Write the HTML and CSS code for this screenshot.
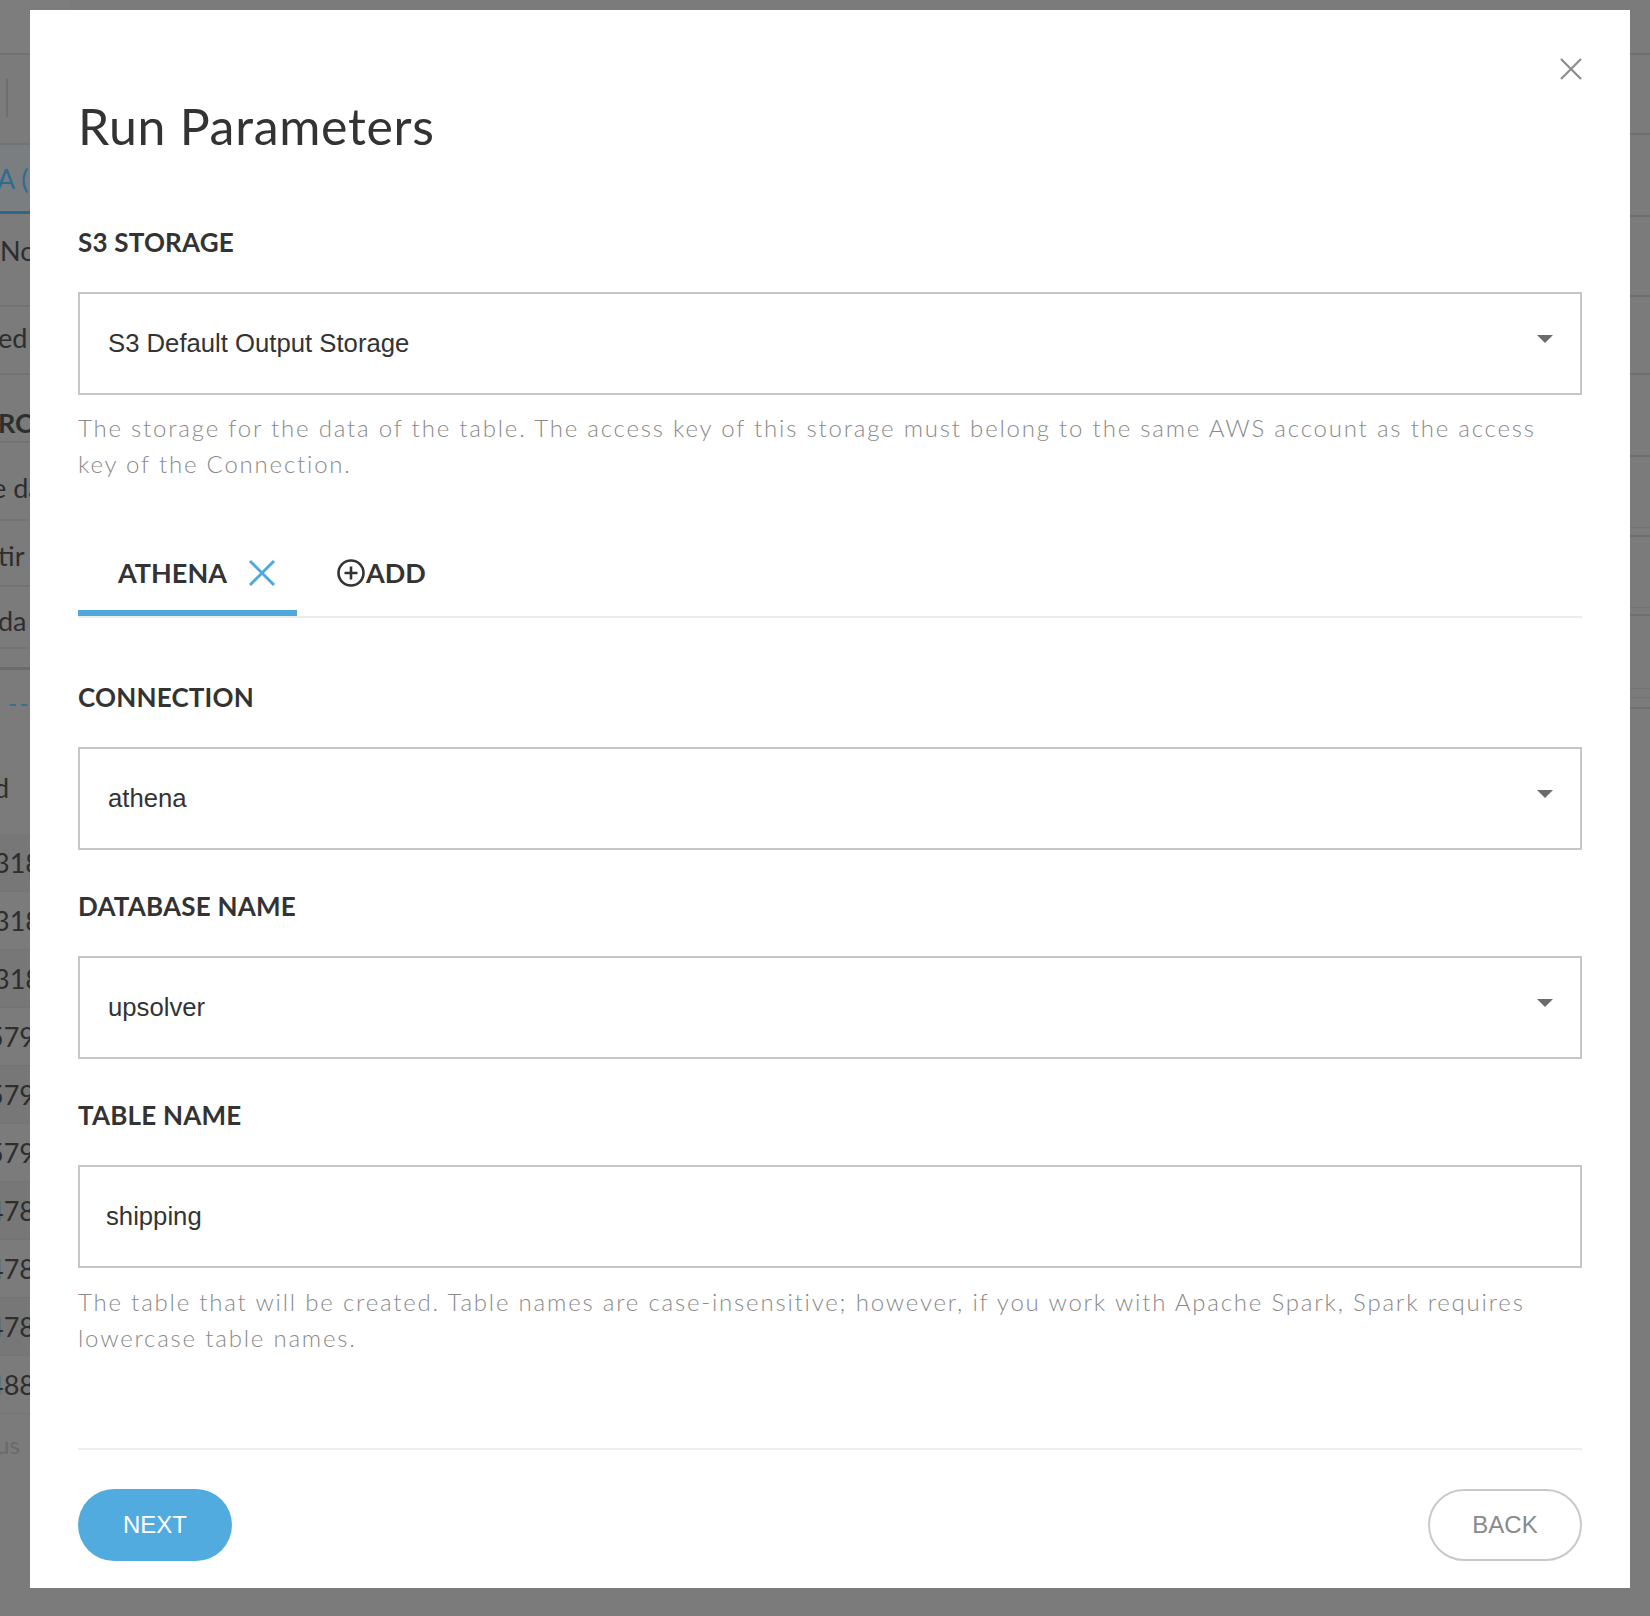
FILE: index.html
```html
<!DOCTYPE html>
<html lang="en">
<head>
<meta charset="utf-8">
<title>Run Parameters</title>
<link rel="stylesheet" href="styles.css">
</head>
<body>
<div class="page">
  <div class="strip-left">
    <div class="bg-top"></div>
    <div class="bg-toolbar"><span class="vsep"></span></div>
    <div class="bg-tabband"><span class="bg-tabtxt">A (</span></div>
    <div class="bg-row r-no"><span>No</span></div>
    <div class="bg-row r-ed"><span class="cut2">ed</span></div>
    <div class="bg-row r-rc"><span class="bold cut2">RC</span></div>
    <div class="bg-row r-eda"><span class="cut8">e da</span></div>
    <div class="bg-row r-tir"><span class="cut2">tir</span></div>
    <div class="bg-row r-da"><span class="cut2">da</span></div>
    <div class="bg-gap"></div>
    <div class="bg-dash"><span class="dash"></span></div>
    <div class="bg-row r-d"><span class="cut6">d</span></div>
    <div class="bg-trow alt"><span class="cut6">318</span></div>
    <div class="bg-trow"><span class="cut6">318</span></div>
    <div class="bg-trow alt"><span class="cut6">318</span></div>
    <div class="bg-trow"><span class="cut10">579</span></div>
    <div class="bg-trow alt"><span class="cut10">579</span></div>
    <div class="bg-trow"><span class="cut10">579</span></div>
    <div class="bg-trow alt"><span class="cut10">478</span></div>
    <div class="bg-trow"><span class="cut10">478</span></div>
    <div class="bg-trow alt"><span class="cut10">478</span></div>
    <div class="bg-trow"><span class="cut10">488</span></div>
    <div class="bg-foot"><span class="cut4">us</span></div>
  </div>
  <div class="strip-mid"></div>
  <div class="strip-right">
    <div class="rr h55"></div>
    <div class="rr h80"></div>
    <div class="rr h82"></div>
    <div class="rr h80"></div>
    <div class="rr h78"></div>
    <div class="rr h82"></div>
    <div class="rr h71 thin"></div>
    <div class="rr h9"></div>
    <div class="rr h71 thin"></div>
    <div class="rr h8"></div>
    <div class="rr h73 thin"></div>
    <div class="rr h9 thin"></div>
    <div class="rr h11"></div>
  </div>
</div>

<div class="modal">
  <button class="close" aria-label="Close">
    <svg viewBox="0 0 22 22" width="22" height="22"><path d="M1 1 L21 21 M21 1 L1 21" stroke="#8c8c8c" stroke-width="2.2" fill="none"/></svg>
  </button>

  <h1 class="title">Run Parameters</h1>

  <div class="label label-first">S3 STORAGE</div>
  <div class="field select">
    <span class="value">S3 Default Output Storage</span>
    <span class="caret"></span>
  </div>
  <p class="help">The storage for the data of the table. The access key of this storage must belong to the same AWS account as the access key of the Connection.</p>

  <div class="tabs">
    <div class="tab active">
      <span>ATHENA</span>
      <svg class="tab-x" viewBox="0 0 28 28" width="28" height="28"><path d="M2 2 L26 26 M26 2 L2 26" stroke="#4fa9dc" stroke-width="3" fill="none"/></svg>
    </div>
    <div class="tab add">
      <svg class="plus-circle" viewBox="0 0 28 28" width="28" height="28"><circle cx="14" cy="14" r="12.5" stroke="#333" stroke-width="2.6" fill="none"/><path d="M14 7.5 V20.5 M7.5 14 H20.5" stroke="#333" stroke-width="2.6" fill="none"/></svg>
      <span>ADD</span>
    </div>
  </div>

  <div class="label label-tabs">CONNECTION</div>
  <div class="field select">
    <span class="value">athena</span>
    <span class="caret"></span>
  </div>

  <div class="label label-next">DATABASE NAME</div>
  <div class="field select">
    <span class="value">upsolver</span>
    <span class="caret"></span>
  </div>

  <div class="label label-next">TABLE NAME</div>
  <div class="field input">
    <span class="value">shipping</span>
  </div>
  <p class="help help-table">The table that will be created. Table names are case-insensitive; however, if you work with Apache Spark, Spark requires lowercase table names.</p>

  <div class="divider"></div>

  <div class="actions">
    <button class="btn btn-primary">NEXT</button>
    <button class="btn btn-secondary">BACK</button>
  </div>
</div>
</body>
</html>
```

FILE: styles.css
```css
* { box-sizing: border-box; }
html, body { margin: 0; padding: 0; }
body {
  width: 1650px;
  height: 1616px;
  overflow: hidden;
  position: relative;
  background: #7b7b7b;
  font-family: Lato, "Noto Sans", sans-serif;
}

/* dimmed page behind the dialog */
.page { display: flex; height: 1616px; }
.strip-left { width: 70px; display: flex; flex-direction: column; overflow: hidden; }
.strip-mid { flex: 1; }
.strip-right { width: 40px; display: flex; flex-direction: column; }

.bg-top { flex: none; height: 55px; border-bottom: 2px solid #727272; background: #7d7d7d; }
.bg-toolbar { flex: none; height: 90px; padding: 24px 0 0 6px; border-bottom: 2px solid #727272; }
.vsep { display: block; width: 2px; height: 38px; background: #6e6e6e; }
.bg-tabband {
  flex: none;
  height: 69px; background: #7b7e81; border-bottom: 3px solid #2d6688;
  display: flex; align-items: center; font-size: 27px; color: #2f6c90;
}
.bg-tabtxt { margin-left: -3px; white-space: nowrap; }
.bg-row {
  flex: none;
  display: block; border-bottom: 2px solid #737373;
  font-size: 27px; line-height: 32px; color: #2e2e2e; white-space: nowrap;
}
.bg-row span { display: inline-block; }
.r-no { height: 93px; padding-top: 21px; }
.r-ed { height: 68px; padding-top: 15px; }
.r-rc { height: 68px; padding-top: 32px; }
.r-eda { height: 78px; padding-top: 29px; }
.r-tir { height: 66px; padding-top: 19px; }
.r-da { height: 62px; padding-top: 18px; }
.r-d { height: 94px; padding-top: 32px; border-bottom: 0; }
.bold { font-weight: 700; }
.cut2 { margin-left: -2px; }
.cut4 { margin-left: -4px; }
.cut6 { margin-left: -6px; }
.cut8 { margin-left: -8px; }
.cut10 { margin-left: -12px; }
.bg-gap { flex: none; height: 21px; border-bottom: 3px solid #6b6b6b; }
.bg-dash { flex: none; height: 70px; display: flex; align-items: center; padding-left: 10px; }
.dash { display: block; width: 40px; border-top: 2px dashed #3c6f8e; }
.bg-trow {
  flex: none;
  height: 58px; display: flex; align-items: center; font-size: 27px; color: #2e2e2e;
  border-bottom: 1px solid #747474; white-space: nowrap;
}
.bg-trow.alt { background: #777777; }
.bg-foot { flex: none; height: 90px; padding-top: 16px; font-size: 24px; line-height: 30px; color: #6a6a6a; white-space: nowrap; }
.bg-foot span { display: inline-block; }

.rr { flex: none; border-bottom: 2px solid #6f6f6f; }
.rr.thin { border-bottom: 1px solid #737373; }
.h55 { height: 55px; }
.h80 { height: 80px; }
.h82 { height: 82px; }
.h78 { height: 78px; }
.h71 { height: 71px; }
.h73 { height: 73px; }
.h9 { height: 9px; }
.h8 { height: 8px; }
.h11 { height: 11px; }

/* dialog */
.modal {
  position: absolute;
  left: 30px;
  top: 10px;
  width: 1600px;
  height: 1578px;
  background: #ffffff;
  padding: 87px 48px 0;
}
.close {
  position: absolute;
  top: 48px;
  right: 48px;
  width: 22px;
  height: 22px;
  padding: 0;
  border: 0;
  background: none;
  display: block;
}
.close svg { display: block; }

.title {
  margin: 0;
  font-size: 50px;
  line-height: 58px;
  font-weight: 400;
  letter-spacing: 0.7px;
  color: #333333;
}

.label {
  font-size: 26px;
  line-height: 32px;
  font-weight: 700;
  color: #333333;
  letter-spacing: 0.2px;
}
.label-first { margin-top: 71px; }
.label-tabs { margin-top: 63px; }
.label-next { margin-top: 40px; }

.field {
  margin-top: 34px;
  height: 103px;
  border: 2px solid #c6c6c6;
  display: flex;
  align-items: center;
  padding: 0 27px 0 28px;
  font-family: "Liberation Sans", Arial, sans-serif;
  font-size: 25.7px;
  color: #333333;
}
.field.input { padding-left: 26px; }
.caret {
  margin-left: auto;
  margin-bottom: 9px;
  width: 0;
  height: 0;
  border-left: 8px solid transparent;
  border-right: 8px solid transparent;
  border-top: 8px solid #6b6b6b;
}

.help {
  margin: 15px 0 0;
  max-width: 1480px;
  font-size: 24px;
  line-height: 36px;
  font-weight: 300;
  letter-spacing: 1.8px;
  color: #8a8a8a;
}
.help-table { margin-top: 16px; }

.tabs {
  margin-top: 75px;
  display: flex;
  border-bottom: 2px solid #ededed;
}
.tab {
  display: flex;
  align-items: center;
  padding: 0 21px 21px 40px;
  border-bottom: 6px solid transparent;
  font-size: 27px;
  line-height: 32px;
  font-weight: 700;
  color: #333333;
}
.tab.active { border-bottom-color: #4fa9dc; }
.tab-x { margin-left: 21px; display: block; }
.tab.add { padding-left: 40px; }
.plus-circle { display: block; margin-right: 1px; }

.divider {
  margin-top: 92px;
  border-top: 2px solid #eeeeee;
}

.actions {
  margin-top: 39px;
  display: flex;
  justify-content: space-between;
}
.btn {
  width: 154px;
  height: 72px;
  border-radius: 36px;
  font-family: "Liberation Sans", Arial, sans-serif;
  font-size: 24px;
  display: flex;
  align-items: center;
  justify-content: center;
  padding: 0;
  cursor: pointer;
}
.btn-primary { background: #52abde; color: #ffffff; border: 0; }
.btn-secondary { background: #ffffff; color: #8a8a8a; border: 2px solid #c9c9c9; }
```
